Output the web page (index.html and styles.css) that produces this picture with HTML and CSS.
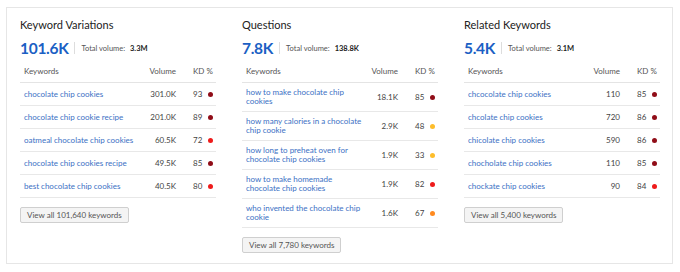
FILE: index.html
```html
<!DOCTYPE html>
<html lang="en">
<head>
  <meta charset="UTF-8" />
  <title>Keyword Overview</title>
  <link rel="stylesheet" href="styles.css">
</head>
<body>
  <div class="card">

    <section class="col">
      <h2>Keyword Variations</h2>
      <div class="stat">
        <span class="big">101.6K</span>
        <span class="total">Total volume: <b>3.3M</b></span>
      </div>
      <table class="kw">
        <colgroup><col><col class="c-vol"><col class="c-kd"></colgroup>
        <thead><tr><th>Keywords</th><th class="vol">Volume</th><th>KD %</th></tr></thead>
        <tbody>
          <tr><td><a href="#">chocolate chip cookies</a></td><td class="vol">301.0K</td><td>93<i class="dot hard"></i></td></tr>
          <tr><td><a href="#">chocolate chip cookie recipe</a></td><td class="vol">201.0K</td><td>89<i class="dot hard"></i></td></tr>
          <tr><td><a href="#">oatmeal chocolate chip cookies</a></td><td class="vol">60.5K</td><td>72<i class="dot high"></i></td></tr>
          <tr><td><a href="#">chocolate chip cookies recipe</a></td><td class="vol">49.5K</td><td>85<i class="dot hard"></i></td></tr>
          <tr><td><a href="#">best chocolate chip cookies</a></td><td class="vol">40.5K</td><td>80<i class="dot high"></i></td></tr>
        </tbody>
      </table>
      <button class="more">View all 101,640 keywords</button>
    </section>

    <section class="col">
      <h2>Questions</h2>
      <div class="stat">
        <span class="big">7.8K</span>
        <span class="total">Total volume: <b>138.8K</b></span>
      </div>
      <table class="kw">
        <colgroup><col><col class="c-vol"><col class="c-kd"></colgroup>
        <thead><tr><th>Keywords</th><th class="vol">Volume</th><th>KD %</th></tr></thead>
        <tbody>
          <tr><td><a href="#">how to make chocolate chip cookies</a></td><td class="vol">18.1K</td><td>85<i class="dot hard"></i></td></tr>
          <tr><td><a href="#">how many calories in a chocolate chip cookie</a></td><td class="vol">2.9K</td><td>48<i class="dot mid"></i></td></tr>
          <tr><td><a href="#">how long to preheat oven for chocolate chip cookies</a></td><td class="vol">1.9K</td><td>33<i class="dot mid"></i></td></tr>
          <tr><td><a href="#">how to make homemade chocolate chip cookies</a></td><td class="vol">1.9K</td><td>82<i class="dot high"></i></td></tr>
          <tr><td><a href="#">who invented the chocolate chip cookie</a></td><td class="vol">1.6K</td><td>67<i class="dot warm"></i></td></tr>
        </tbody>
      </table>
      <button class="more">View all 7,780 keywords</button>
    </section>

    <section class="col">
      <h2>Related Keywords</h2>
      <div class="stat">
        <span class="big">5.4K</span>
        <span class="total">Total volume: <b>3.1M</b></span>
      </div>
      <table class="kw">
        <colgroup><col><col class="c-vol"><col class="c-kd"></colgroup>
        <thead><tr><th>Keywords</th><th class="vol">Volume</th><th>KD %</th></tr></thead>
        <tbody>
          <tr><td><a href="#">chcocolate chip cookies</a></td><td class="vol">110</td><td>85<i class="dot hard"></i></td></tr>
          <tr><td><a href="#">chcolate chip cookies</a></td><td class="vol">720</td><td>86<i class="dot hard"></i></td></tr>
          <tr><td><a href="#">chicolate chip cookies</a></td><td class="vol">590</td><td>86<i class="dot hard"></i></td></tr>
          <tr><td><a href="#">chocholate chip cookies</a></td><td class="vol">110</td><td>85<i class="dot hard"></i></td></tr>
          <tr><td><a href="#">chockate chip cookies</a></td><td class="vol">90</td><td>84<i class="dot high"></i></td></tr>
        </tbody>
      </table>
      <button class="more">View all 5,400 keywords</button>
    </section>

  </div>
</body>
</html>
```

FILE: styles.css
```css
body {
  font-family: 'Lato', sans-serif;
  background-color: #fff;
  color: #333;
  margin: 0;
  padding: 0;
}
.card {
  box-sizing: border-box;
  width: 667px;
  height: 257px;
  margin: 7px 6px;
  padding: 10px 12px 0 13px;
  border: 1px solid #e6e6e6;
  display: flex;
  gap: 26px;
}
.col {
  width: 196px;
  flex: none;
}
h2 {
  margin: 0;
  font-size: 11px;
  font-weight: 400;
  line-height: 14px;
  color: #222;
}
.stat {
  display: flex;
  align-items: center;
  margin-top: 8px;
  height: 16px;
}
.big {
  font-size: 15.5px;
  font-weight: 700;
  color: #1b5fc4;
  letter-spacing: -0.3px;
  padding-right: 6px;
  border-right: 1px solid #ddd;
  line-height: 12px;
}
.total {
  font-size: 7.5px;
  color: #555;
  margin-left: 6px;
}
.total b {
  color: #222;
  margin-left: 3px;
}
.kw {
  width: 196px;
  table-layout: fixed;
  border-collapse: collapse;
  margin-top: 5px;
  font-size: 8px;
}
.c-vol {
  width: 40px;
}
.c-kd {
  width: 34px;
}
.kw th {
  font-weight: 400;
  color: #555;
  text-align: left;
  padding: 5px 4px 6px;
  line-height: 10px;
  border-bottom: 1px solid #e4e4e4;
}
.kw td {
  height: 23px;
  padding: 5px 2px 5px 4px;
  line-height: 9px;
  color: #444;
  border-bottom: 1px solid #e8e8e8;
  box-sizing: border-box;
}
.kw th:last-child,
.kw td:last-child {
  padding-left: 11px;
  padding-right: 0;
  white-space: nowrap;
}
.kw .vol {
  text-align: right;
  padding-right: 6px;
}
.kw a {
  color: #3b70c4;
  text-decoration: none;
}
.dot {
  display: inline-block;
  width: 5px;
  height: 5px;
  border-radius: 50%;
  margin-left: 6px;
  vertical-align: 0;
}
.hard { background-color: #900d18; }
.high { background-color: #ee1b1b; }
.warm { background-color: #ff8a1f; }
.mid { background-color: #fdbd2b; }
.more {
  margin-top: 9px;
  height: 16px;
  padding: 0 6px;
  font-family: 'Lato', sans-serif;
  font-size: 8px;
  color: #555;
  background-color: #f4f4f4;
  border: 1px solid #cfcfcf;
  border-radius: 2px;
}
```
